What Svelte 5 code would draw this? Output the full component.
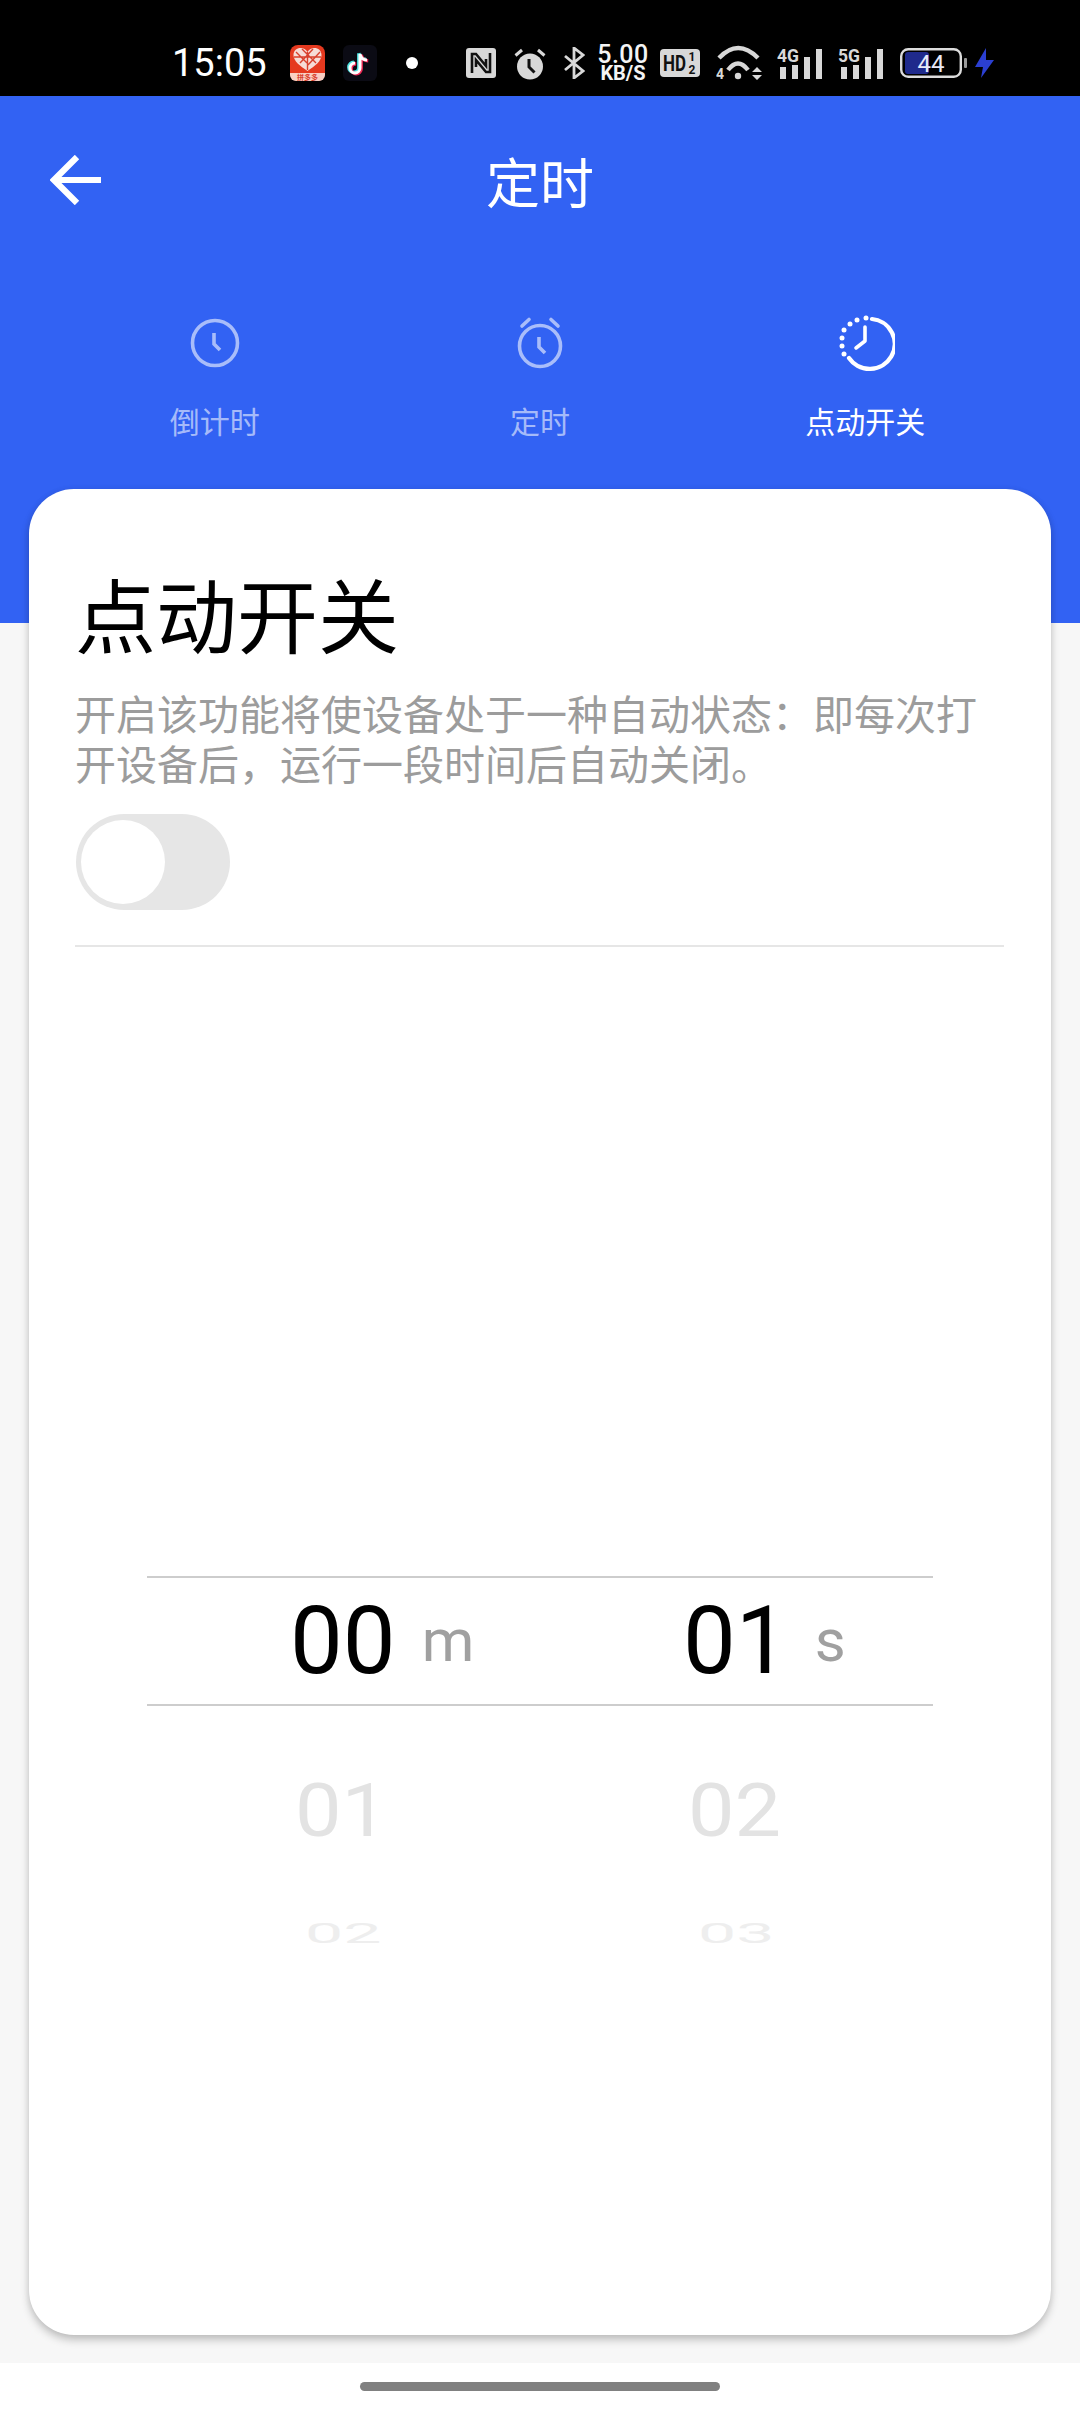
<script lang="ts">
	const tabs = ['倒计时', '定时', '点动开关'];
	const rows = [
		{ left: '01', right: '02', cls: 'near' },
		{ left: '02', right: '03', cls: 'far' }
	];
	const dots = [
		[866, 318], [857, 320], [850, 324], [844, 330], [842, 338], [842, 346], [844, 354]
	];
</script>

<div class="page">
	<div class="status">
		<span class="time">15:05</span>
		<svg class="pdd" width="35" height="36" viewBox="0 0 35 36">
			<rect width="35" height="36" rx="8" fill="#e5391f" />
			<path d="M0 28H35V30a6 6 0 0 1-6 6H6a6 6 0 0 1-6-6Z" fill="#f9cfc4" />
			<path d="M17.5 26C10 21 3.5 16 3.5 10C3.5 5.5 7 3 10.5 3C13.5 3 16 4.5 17.5 7C19 4.5 21.5 3 24.5 3C28 3 31.5 5.5 31.5 10C31.5 16 25 21 17.5 26Z" fill="#f6dcd6" />
			<path d="M6 7L17 18M12 4L26 18M23 4L10 18M30 7L18 20M4 12H31M17.5 7V25" stroke="#d8402c" stroke-width="1.4" fill="none" />
			<text x="17.5" y="34.5" text-anchor="middle" class="pdd-text">拼多多</text>
		</svg>
		<svg class="tt" width="34" height="36" viewBox="0 0 34 36">
			<rect width="34" height="36" rx="6" fill="#0b0b14" />
			<path d="M17 9V23a5 5 0 1 1-5-5M17 9c1 4 4 6 7 6" transform="translate(-1.2 -.8)" fill="none" stroke="#4fe3e0" stroke-width="3.4" />
			<path d="M17 9V23a5 5 0 1 1-5-5M17 9c1 4 4 6 7 6" transform="translate(1.2 .8)" fill="none" stroke="#ee2a55" stroke-width="3.4" />
			<path d="M17 9V23a5 5 0 1 1-5-5M17 9c1 4 4 6 7 6" fill="none" stroke="#fff" stroke-width="3" />
		</svg>
		<span class="dot"></span>

		<svg class="nfc" width="30" height="30" viewBox="0 0 30 30">
			<rect width="30" height="30" rx="3" fill="#d8d8d8" />
			<path d="M6 25V6H10L20 18V11M24 5V24H20L10 12V19" fill="none" stroke="#111" stroke-width="2.6" />
		</svg>
		<svg class="alarm" width="32" height="33" viewBox="0 0 32 33">
			<circle cx="16" cy="19.5" r="13" fill="#d8d8d8" />
			<path d="M1.5 8.5L8 3M30.5 8.5L24 3" stroke="#d8d8d8" stroke-width="3" />
			<path d="M15 12V20L20.5 25.5" fill="none" stroke="#111" stroke-width="3" />
		</svg>
		<svg class="bt" width="22" height="32" viewBox="0 0 22 32">
			<path d="M2 9L20 24L11 31V1L20 8L2 23" fill="none" stroke="#d8d8d8" stroke-width="2.8" />
		</svg>
		<div class="speed">
			<span class="speed-num">5.00</span>
			<span class="speed-unit">KB/S</span>
		</div>
		<svg class="hd" width="40" height="28" viewBox="0 0 40 28">
			<rect width="40" height="28" rx="4" fill="#d8d8d8" />
			<text x="3" y="22" class="hd-text" textLength="23" lengthAdjust="spacingAndGlyphs">HD</text>
			<text x="32" y="12" text-anchor="middle" class="hd-small">1</text>
			<text x="32" y="25" text-anchor="middle" class="hd-small">2</text>
		</svg>
		<svg class="wifi" width="46" height="43" viewBox="0 -5 46 43">
			<path d="M3 11Q22-9 42 11" fill="none" stroke="#d8d8d8" stroke-width="4.4" />
			<path d="M12 23Q22 10 32 23" fill="none" stroke="#d8d8d8" stroke-width="4.4" />
			<circle cx="22" cy="29" r="3.2" fill="#d8d8d8" />
			<text x="0" y="32" class="wifi-text">4</text>
			<path d="M36 25L41 20L46 25ZM36 28L41 33L46 28Z" fill="#d8d8d8" />
		</svg>
		<svg class="sig" width="46" height="56" viewBox="0 -12 46 56">
			<text x="0" y="15" class="sig-text" textLength="22" lengthAdjust="spacingAndGlyphs">4G</text>
			<path d="M3 20h6v12h-6ZM15 18h6v14h-6ZM27 10h6v22h-6ZM39 2h6v30h-6Z" fill="#d8d8d8" />
		</svg>
		<svg class="sig" width="46" height="56" viewBox="0 -12 46 56">
			<text x="0" y="15" class="sig-text" textLength="22" lengthAdjust="spacingAndGlyphs">5G</text>
			<path d="M3 20h6v12h-6ZM15 18h6v14h-6ZM27 10h6v22h-6ZM39 2h6v30h-6Z" fill="#d8d8d8" />
		</svg>
		<svg class="bat" width="67" height="30" viewBox="0 0 67 30">
			<rect x="5" y="4" width="24" height="22" rx="3" fill="#1f2a8c" />
			<rect x="1.2" y="1.2" width="59.6" height="27.6" rx="7" fill="none" stroke="#dcdcdc" stroke-width="2.4" />
			<rect x="64" y="10" width="3" height="10" rx="1" fill="#999" />
			<text x="31" y="24" text-anchor="middle" class="bat-text">44</text>
		</svg>
		<svg class="bolt" width="19" height="30" viewBox="0 0 19 30">
			<path d="M11 0L0 19H8L6 30L19 12H11Z" fill="#2b3fd1" />
		</svg>
	</div>

	<div class="hero">
		<div class="bar">
			<svg class="back" width="51" height="50" viewBox="0 0 51 50">
				<path d="M51 25H4M27 2L4 25L27 48" fill="none" stroke="#fff" stroke-width="6.2" />
			</svg>
			<h1>定时</h1>
		</div>
		<div class="tabs">
			{#each tabs as tab, i}
				<div class="tab" class:active={i === 2}>
					{#if i === 0}
						<svg width="60" height="60" viewBox="0 0 60 60" fill="none" stroke="currentColor">
							<circle cx="30" cy="30" r="22.5" stroke-width="3.6" />
							<path d="M29 20V31L35 37" stroke-width="3.6" />
						</svg>
					{:else if i === 1}
						<svg width="60" height="60" viewBox="0 0 60 60" fill="none" stroke="currentColor">
							<circle cx="30" cy="33" r="20.5" stroke-width="3.6" />
							<path d="M29 24V34L35 40" stroke-width="3.6" />
							<path d="M12 13L19 6.5M48 13L41 6.5" stroke-width="3.6" stroke-linecap="round" />
						</svg>
					{:else}
						<svg width="60" height="60" viewBox="835 313 60 60" fill="none" stroke="currentColor">
							<path d="M872 319A25 25 0 1 1 849 358" stroke-width="4.2" stroke-linecap="round" />
							<path d="M865 327V341L856 348" stroke-width="3.6" stroke-linecap="round" stroke-linejoin="round" />
							{#each dots as [cx, cy]}
								<circle {cx} {cy} r="2.5" fill="currentColor" stroke="none" />
							{/each}
						</svg>
					{/if}
					<span>{tab}</span>
				</div>
			{/each}
		</div>
	</div>

	<div class="main">
		<div class="card">
			<h2>点动开关</h2>
			<p>开启该功能将使设备处于一种自动状态：即每次打开设备后，运行一段时间后自动关闭。</p>
			<div class="toggle"><span class="thumb"></span></div>
			<div class="divider"></div>

			<div class="picker">
				<div class="selected">
					<div class="cell">
						<span class="value">00</span><span class="unit">m</span>
					</div>
					<div class="cell">
						<span class="value">01</span><span class="unit">s</span>
					</div>
				</div>
				{#each rows as row}
					<div class="row {row.cls}">
						<span>{row.left}</span>
						<span>{row.right}</span>
					</div>
				{/each}
			</div>
		</div>
	</div>

	<div class="nav"><span class="home"></span></div>
</div>

<style>
	:global(body) {
		margin: 0;
		background: #fff;
	}

	.page {
		width: 1080px;
		height: 2412px;
		display: flex;
		flex-direction: column;
		overflow: hidden;
		font-family: 'Noto Sans CJK SC', sans-serif;
	}

	.status {
		box-sizing: border-box;
		height: 96px;
		padding: 30px 0 0 172px;
		background: #000;
		display: flex;
		align-items: center;
		flex: none;
	}

	.status svg {
		flex: none;
		display: block;
	}

	.time {
		width: 94px;
		color: #fff;
		font: 400 38px/1 Roboto, sans-serif;
		white-space: nowrap;
	}

	.pdd { margin-left: 24px; }
	.pdd-text {
		font: 700 7px 'Noto Sans CJK SC', sans-serif;
		fill: #d8402c;
	}
	.tt { margin-left: 18px; }

	.dot {
		width: 12px;
		height: 12px;
		margin-left: 29px;
		border-radius: 50%;
		background: #fff;
		flex: none;
	}

	.nfc { margin-left: 48px; }
	.alarm { margin-left: 18px; }
	.bt { margin-left: 17px; }

	.speed {
		width: 50px;
		margin-left: 13px;
		display: flex;
		flex-direction: column;
		align-items: center;
		color: #f4f4f4;
		font-family: Roboto, sans-serif;
	}

	.speed-num {
		font-size: 25px;
		font-weight: 500;
		line-height: 20px;
		letter-spacing: 0.5px;
	}

	.speed-unit {
		font-size: 20px;
		font-weight: 700;
		line-height: 17px;
	}

	.hd { margin-left: 12px; }
	.hd-text {
		font: 700 22px Roboto, sans-serif;
		fill: #111;
	}
	.hd-small {
		font: 700 12px Roboto, sans-serif;
		fill: #111;
	}

	.wifi { margin-left: 16px; }
	.wifi-text {
		font: 700 14px Roboto, sans-serif;
		fill: #d8d8d8;
	}

	.sig { margin-left: 15px; }
	.sig-text {
		font: 700 19px Roboto, sans-serif;
		fill: #d8d8d8;
	}

	.bat { margin-left: 16px; }
	.bat-text {
		font: 400 24px Roboto, sans-serif;
		fill: #e8eaf8;
	}
	.bolt { margin-left: 8px; }

	.hero {
		box-sizing: border-box;
		height: 527px;
		flex: none;
		background: #3262f3;
		color: #fff;
	}

	.bar {
		height: 176px;
		padding: 0 50px;
		display: grid;
		grid-template-columns: 1fr auto 1fr;
		align-items: center;
	}

	h1 {
		grid-column: 2;
		margin: -6px 0 0;
		font-size: 54px;
		font-weight: 400;
		line-height: 70px;
	}

	.back {
		grid-column: 1;
		grid-row: 1;
		display: block;
		margin-top: -8px;
	}

	.tabs {
		margin-top: 41px;
		padding: 0 52px;
		display: grid;
		grid-template-columns: repeat(3, 1fr);
	}

	.tab {
		display: flex;
		flex-direction: column;
		align-items: center;
		gap: 26px;
		color: rgba(255, 255, 255, 0.58);
		font-size: 30px;
		line-height: 42px;
	}

	.tab svg {
		display: block;
	}

	.tab.active {
		color: #fff;
	}

	.main {
		height: 1740px;
		flex: none;
		box-sizing: border-box;
		padding: 0 29px;
		background: #f7f7f7;
	}

	.card {
		box-sizing: border-box;
		height: 1846px;
		margin-top: -134px;
		padding: 73px 47px 0 46px;
		background: #fff;
		border-radius: 45px;
		box-shadow: 0 5px 9px rgba(0, 0, 0, 0.22), 0 0 6px rgba(0, 0, 0, 0.06);
	}

	h2 {
		margin: 0;
		font-size: 81px;
		font-weight: 400;
		line-height: 100px;
		color: #000;
	}

	p {
		margin: 25px 0 0;
		font-size: 41px;
		line-height: 50px;
		color: #9c9c9c;
	}

	.toggle {
		box-sizing: border-box;
		width: 154px;
		height: 96px;
		margin: 27px 0 0 1px;
		padding: 6px 5px;
		border-radius: 48px;
		background: #e6e6e6;
	}

	.thumb {
		display: block;
		width: 84px;
		height: 84px;
		border-radius: 50%;
		background: #fff;
	}

	.divider {
		height: 2px;
		margin-top: 35px;
		background: #e6e6e6;
	}

	.picker {
		width: 786px;
		margin: 629px 0 0 72px;
		font-family: Roboto, sans-serif;
	}

	.selected {
		box-sizing: border-box;
		height: 130px;
		display: grid;
		grid-template-columns: 1fr 1fr;
		border-top: 2px solid #cdcdcd;
		border-bottom: 2px solid #cdcdcd;
	}

	.cell {
		display: flex;
		align-items: center;
		gap: 26px;
		padding-left: 143px;
	}

	.value {
		font-size: 94px;
		line-height: 126px;
		color: #000;
	}

	.unit {
		font-size: 60px;
		line-height: 126px;
		color: #a0a0a0;
	}

	.row {
		display: grid;
		grid-template-columns: 1fr 1fr;
	}

	.near {
		height: 208px;
		font-size: 74px;
		line-height: 210px;
		color: #e3e3e3;
	}

	.near span {
		display: block;
		padding-left: 148px;
		transform: scaleX(1.12);
		transform-origin: 148px 50%;
	}

	.far {
		height: 40px;
		font-size: 68px;
		line-height: 40px;
		color: #eeeeee;
	}

	.far span {
		display: block;
		padding-left: 158px;
		transform: scaleY(0.41);
	}

	.nav {
		flex: 1;
		background: #fff;
		display: flex;
		justify-content: center;
		padding-top: 19px;
	}

	.home {
		width: 360px;
		height: 9px;
		border-radius: 4.5px;
		background: #808080;
	}
</style>
